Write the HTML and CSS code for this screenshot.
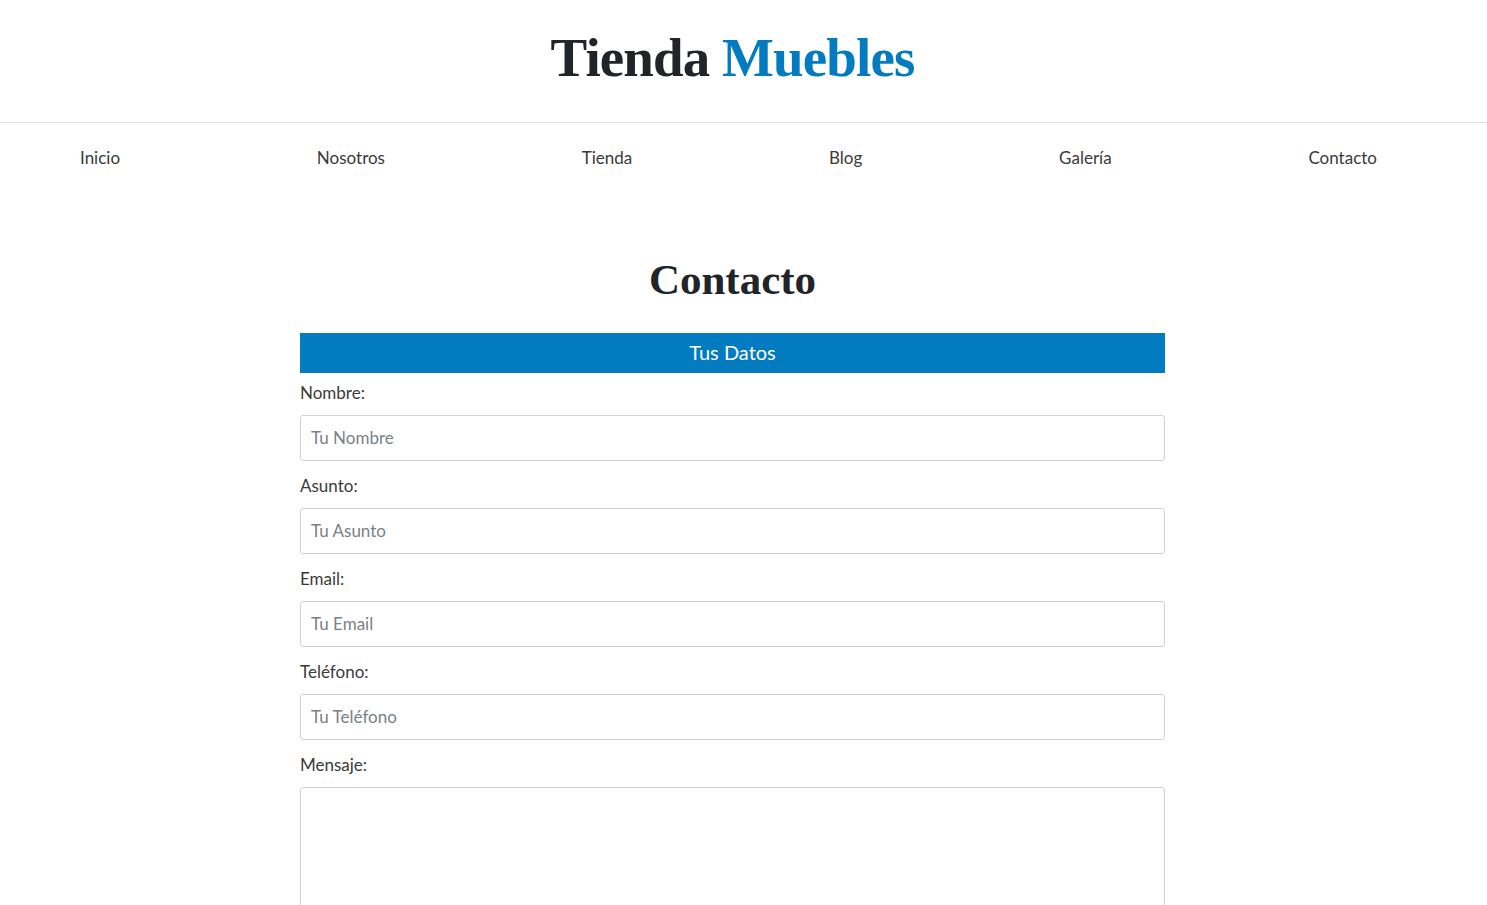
FILE: index.html
```html
<!DOCTYPE html>
<html lang="es">
<head>
<meta charset="utf-8">
<title>Tienda Muebles - Contacto</title>
<link rel="stylesheet" href="styles.css">
</head>
<body>
<header class="site-header">
  <div class="inner">
    <h1 class="site-title">Tienda <span class="accent">Muebles</span></h1>
  </div>
</header>
<nav class="site-nav">
  <div class="nav-inner">
    <a href="#">Inicio</a>
    <a href="#">Nosotros</a>
    <a href="#">Tienda</a>
    <a href="#">Blog</a>
    <a href="#">Galería</a>
    <a href="#">Contacto</a>
  </div>
</nav>
<main class="main">
  <div class="container">
    <h2 class="page-title">Contacto</h2>
    <form class="form">
      <div class="legend">Tus Datos</div>
      <div class="field">
        <label for="nombre">Nombre:</label>
        <input id="nombre" type="text" placeholder="Tu Nombre">
      </div>
      <div class="field">
        <label for="asunto">Asunto:</label>
        <input id="asunto" type="text" placeholder="Tu Asunto">
      </div>
      <div class="field">
        <label for="email">Email:</label>
        <input id="email" type="email" placeholder="Tu Email">
      </div>
      <div class="field">
        <label for="tel">Teléfono:</label>
        <input id="tel" type="tel" placeholder="Tu Teléfono">
      </div>
      <div class="field">
        <label for="mensaje">Mensaje:</label>
        <textarea id="mensaje"></textarea>
      </div>
    </form>
  </div>
</main>
</body>
</html>
```
FILE: styles.css
```css
* { box-sizing: border-box; }
html, body { margin: 0; padding: 0; }
body {
  font-family: "Lato", "Open Sans", sans-serif;
  font-size: 17px;
  color: #3a3a3a;
  background: #fff;
}
.site-header {
  border-bottom: 1px solid #e2e1e6;
  height: 123px;
}
.inner {
  width: 1465px;
  text-align: center;
  padding-top: 26px;
}
.site-title {
  margin: 0;
  font-family: "Liberation Serif", "Times New Roman", serif;
  font-weight: 700;
  font-size: 55px;
  line-height: 64px;
  letter-spacing: -0.9px;
  color: #212529;
}
.accent { color: #037bc0; }
.nav-inner {
  width: 1465px;
  display: flex;
  justify-content: space-between;
  padding: 23px 88px 0 80px;
}
.nav-inner a {
  color: #3a3a3a;
  text-decoration: none;
  line-height: 24px;
}
.main {
  width: 1465px;
}
.container {
  width: 865px;
  margin: 0 auto;
}
.page-title {
  margin: 85px 0 28px;
  text-align: center;
  font-family: "Liberation Serif", "Times New Roman", serif;
  font-weight: 700;
  font-size: 43px;
  line-height: 50px;
  color: #212529;
}
.legend {
  background: #037bc0;
  color: #fff;
  height: 40px;
  line-height: 39px;
  text-align: center;
  font-size: 20px;
  margin-bottom: 8px;
}
.field {
  display: flex;
  flex-direction: column;
  margin-bottom: 13px;
}
.field label {
  line-height: 24px;
  margin-bottom: 10px;
  color: #3a3a3a;
}
.field input, .field textarea {
  width: 100%;
  height: 46px;
  border: 1px solid #ced1da;
  border-radius: 3px;
  padding: 0 10px 1px;
  font-family: "Lato", "Open Sans", sans-serif;
  font-size: 17px;
  color: #333;
  background: #fff;
}
.field textarea {
  height: 160px;
  padding: 10px;
  resize: vertical;
}
.field input::placeholder {
  color: #7a7f85;
}
```
